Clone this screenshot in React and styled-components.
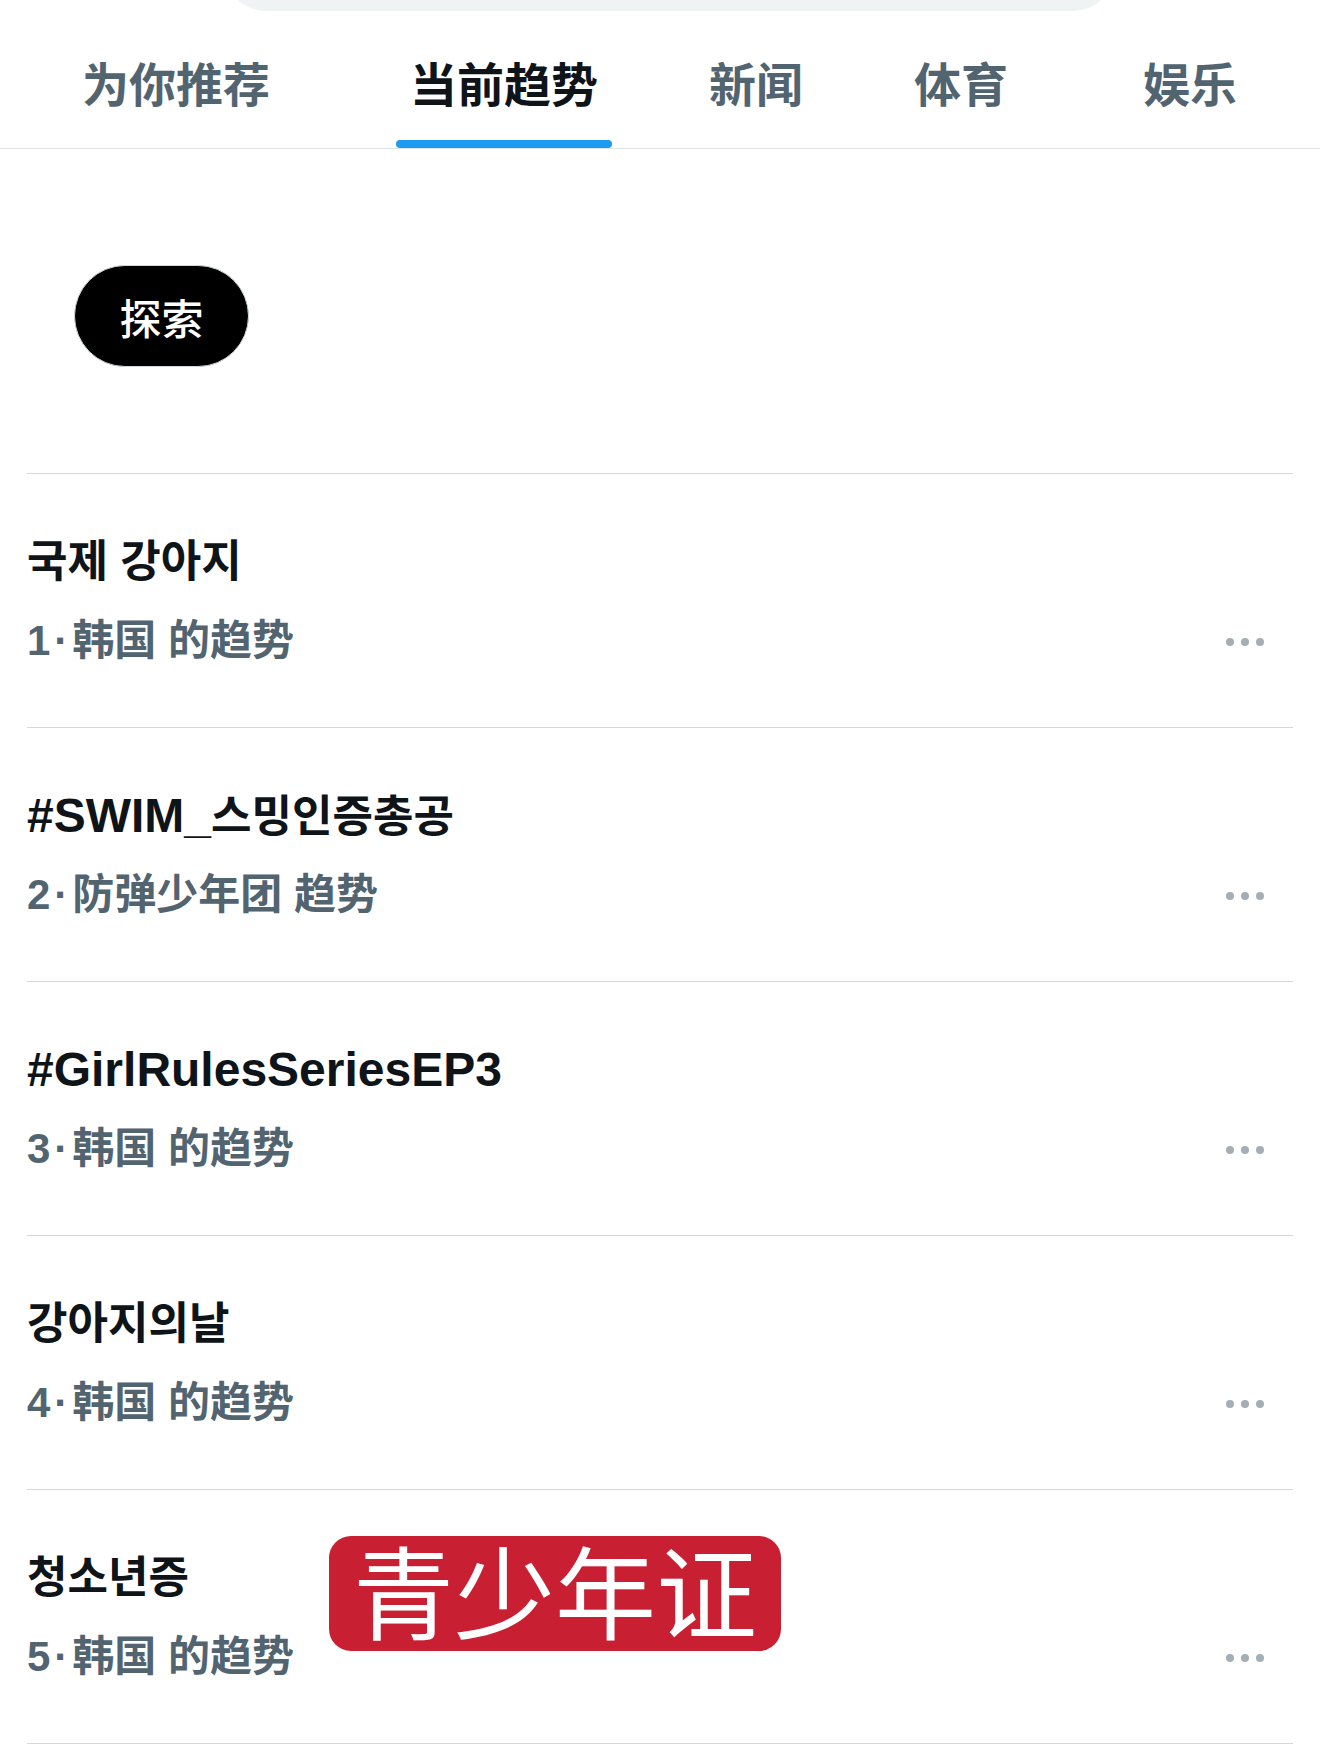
import React from "react";
import styled, { createGlobalStyle } from "styled-components";

const GlobalStyle = createGlobalStyle`
  body {
    margin: 0;
    background: #ffffff;
    font-family: "Liberation Sans", "Noto Sans CJK SC", sans-serif;
  }
  * {
    box-sizing: border-box;
  }
`;

const Page = styled.div`
  width: 1320px;
  height: 1754px;
  overflow: hidden;
  background: #ffffff;
`;

const SearchBar = styled.div`
  width: 891px;
  height: 84px;
  margin: -73px 0 0 224px;
  border-radius: 42px;
  background: #eff3f4;
`;

const TabBar = styled.nav`
  display: flex;
  height: 138px;
  padding-left: 66px;
  border-bottom: 1px solid #dfe3e6;
`;

const Tab = styled.div`
  display: flex;
  flex-direction: column;
  margin-left: ${(props) => props.offset || 0}px;
`;

const TabLabel = styled.span`
  flex: 1;
  display: flex;
  align-items: center;
  padding: 11px 16px 0 16px;
  font-family: "Noto Sans CJK SC", sans-serif;
  font-size: 47px;
  font-weight: 700;
  color: ${(props) => (props.active ? "#0f1419" : "#536471")};
`;

const TabIndicator = styled.div`
  height: 8px;
  margin: 0 ${(props) => (props.active ? 2 : 16)}px;
  border-radius: 4px;
  background: ${(props) => (props.active ? "#1d9bf0" : "transparent")};
`;

const ExploreSection = styled.div`
  padding: 116px 0 106px 74px;
`;

const ExploreButton = styled.button`
  width: 175px;
  height: 102px;
  border: 1px solid #cfd9de;
  border-radius: 51px;
  background: #000000;
  color: #ffffff;
  font-family: "Noto Sans CJK SC", sans-serif;
  font-size: 42px;
  font-weight: 500;
  padding: 0;
`;

const TrendList = styled.div`
  margin: 0 27px;
  border-bottom: 1px solid #cfd9de;
`;

const TrendRow = styled.div`
  position: relative;
  height: 254px;
  padding: 62px 29px 0 0;
  border-top: 1px solid #cfd9de;
  display: grid;
  grid-template-columns: 1fr auto;
  grid-template-rows: 52px 50px;
  row-gap: 28px;
  align-content: start;
`;

const TrendTitle = styled.div`
  grid-column: 1 / 3;
  font-size: 44px;
  line-height: 52px;
  font-weight: 700;
  color: #0f1419;
  white-space: nowrap;
`;

const Latin = styled.span`
  font-size: 48px;
`;

const TrendMeta = styled.div`
  font-size: 42px;
  line-height: 50px;
  font-weight: 700;
  color: #536471;
  white-space: nowrap;
`;

const Separator = styled.span`
  margin: 0 4px;
`;

const MoreButton = styled.div`
  display: flex;
  align-items: center;
  gap: 7px;
  padding-top: 2px;
`;

const Dot = styled.span`
  width: 8px;
  height: 8px;
  border-radius: 50%;
  background: #a3aeb6;
`;

const Sticker = styled.div`
  position: absolute;
  left: 302px;
  top: 46px;
  width: 452px;
  height: 115px;
  padding-bottom: 10px;
  border-radius: 22px;
  background: #c91f32;
  color: #ffffff;
  display: flex;
  align-items: center;
  justify-content: center;
  font-family: "Noto Sans CJK SC", sans-serif;
  font-size: 101px;
  font-weight: 400;
  line-height: 1;
`;

const tabs = [
  { label: "为你推荐", offset: 0 },
  { label: "当前趋势", offset: 108, active: true },
  { label: "新闻", offset: 79 },
  { label: "体育", offset: 79 },
  { label: "娱乐", offset: 103 },
];

const trends = [
  { title: "국제 강아지", rank: 1, context: "韩国 的趋势" },
  { title: "#SWIM_스밍인증총공", rank: 2, context: "防弹少年团 趋势" },
  { title: "#GirlRulesSeriesEP3", rank: 3, context: "韩国 的趋势" },
  { title: "강아지의날", rank: 4, context: "韩国 的趋势" },
  { title: "청소년증", rank: 5, context: "韩国 的趋势", sticker: "青少年证" },
];

// latin runs are set a little larger than the hangul around them
const renderTitle = (title) =>
  title
    .split(/([A-Za-z0-9#_]+)/)
    .filter(Boolean)
    .map((part, i) =>
      /[A-Za-z0-9#_]/.test(part) ? <Latin key={i}>{part}</Latin> : part
    );

const App = () => {
  return (
    <Page>
      <GlobalStyle />
      <SearchBar />
      <TabBar>
        {tabs.map((tab) => (
          <Tab key={tab.label} offset={tab.offset}>
            <TabLabel active={tab.active}>{tab.label}</TabLabel>
            <TabIndicator active={tab.active} />
          </Tab>
        ))}
      </TabBar>
      <ExploreSection>
        <ExploreButton>探索</ExploreButton>
      </ExploreSection>
      <TrendList>
        {trends.map((trend) => (
          <TrendRow key={trend.rank}>
            <TrendTitle>{renderTitle(trend.title)}</TrendTitle>
            <TrendMeta>
              {trend.rank}
              <Separator>·</Separator>
              {trend.context}
            </TrendMeta>
            <MoreButton>
              <Dot />
              <Dot />
              <Dot />
            </MoreButton>
            {trend.sticker && <Sticker>{trend.sticker}</Sticker>}
          </TrendRow>
        ))}
      </TrendList>
    </Page>
  );
};

export default App;
